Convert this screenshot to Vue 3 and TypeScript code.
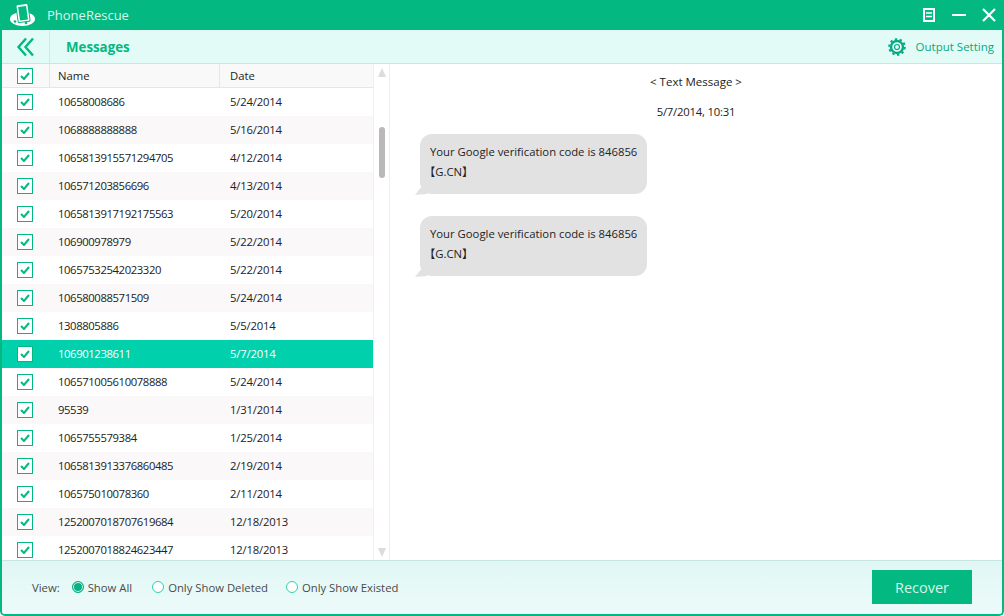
<script setup lang="ts">
interface Row { name: string; date: string; selected?: boolean }
const rows: Row[] = [
  { name: '10658008686', date: '5/24/2014' },
  { name: '1068888888888', date: '5/16/2014' },
  { name: '1065813915571294705', date: '4/12/2014' },
  { name: '106571203856696', date: '4/13/2014' },
  { name: '1065813917192175563', date: '5/20/2014' },
  { name: '106900978979', date: '5/22/2014' },
  { name: '10657532542023320', date: '5/22/2014' },
  { name: '106580088571509', date: '5/24/2014' },
  { name: '1308805886', date: '5/5/2014' },
  { name: '106901238611', date: '5/7/2014', selected: true },
  { name: '106571005610078888', date: '5/24/2014' },
  { name: '95539', date: '1/31/2014' },
  { name: '1065755579384', date: '1/25/2014' },
  { name: '1065813913376860485', date: '2/19/2014' },
  { name: '106575010078360', date: '2/11/2014' },
  { name: '1252007018707619684', date: '12/18/2013' },
  { name: '1252007018824623447', date: '12/18/2013' },
]
const views = ['Show All', 'Only Show Deleted', 'Only Show Existed']
const bubbles = [0, 1]
</script>

<template>
  <div class="app">
    <header class="titlebar">
      <svg class="logo" width="28" height="26" viewBox="0 0 28 26">
        <ellipse cx="13.500" cy="17" rx="12.500" ry="7" fill="#fff" />
        <rect x="7.500" y="1.500" width="13" height="19" rx="1.500" transform="rotate(-8 14 11)" fill="#03b981" />
        <rect x="8.500" y="2.500" width="11" height="17" rx="1" transform="rotate(-8 14 11)" fill="#fff" />
        <rect x="10" y="4.500" width="8" height="13.500" transform="rotate(-8 14 11)" fill="#03b981" />
        <circle cx="6" cy="19.500" r="1.300" fill="#03b981" />
        <circle cx="17" cy="21" r="1.300" fill="#03b981" />
      </svg>
      <span class="app-name">PhoneRescue</span>
      <div class="window-controls">
        <svg width="13" height="14" viewBox="0 0 13 14" fill="none" stroke="#fff" stroke-width="2">
          <rect x="1" y="1" width="10" height="12" />
          <path d="M3 5h6M3 8.500h6" stroke-width="1.500" />
        </svg>
        <svg width="14" height="14" viewBox="0 0 14 14"><rect y="6" width="14" height="2" fill="#fff" /></svg>
        <svg width="14" height="14" viewBox="0 0 14 14" stroke="#fff" stroke-width="2.200"><path d="M1 1l12 12M13 1L1 13" /></svg>
      </div>
    </header>

    <div class="toolbar">
      <div class="back">
        <svg width="19" height="20" viewBox="0 0 19 20" fill="none" stroke="#03b981" stroke-width="2.400">
          <path d="M10 1.500L2.500 10l7.500 8.500" />
          <path d="M17 1.500L9.500 10l7.500 8.500" />
        </svg>
      </div>
      <h1 class="page-title">Messages</h1>
      <div class="output">
        <svg width="18" height="18" viewBox="0 0 18 18" fill="none" stroke="#07a980">
          <circle cx="9" cy="9" r="6" stroke-width="2.400" />
          <circle cx="9" cy="9" r="7.800" stroke-width="2" stroke-dasharray="2.400 2.500" />
          <circle cx="9" cy="9" r="2.500" stroke-width="1.200" />
        </svg>
        <span>Output Setting</span>
      </div>
    </div>

    <main class="content">
      <section class="list-pane">
        <div class="table">
          <div class="head">
            <div class="check-cell head-check"><span class="check"><svg width="10" height="8" viewBox="0 0 10 8" fill="none"><path d="M1 4l3 3 5-6" /></svg></span></div>
            <div class="head-name">Name</div>
            <div class="head-date">Date</div>
          </div>
          <div v-for="row in rows" :key="row.name" class="row" :class="{ selected: row.selected }">
            <div class="check-cell"><span class="check"><svg width="10" height="8" viewBox="0 0 10 8" fill="none"><path d="M1 4l3 3 5-6" /></svg></span></div>
            <div class="cell-name">{{ row.name }}</div>
            <div class="cell-date">{{ row.date }}</div>
          </div>
        </div>
        <div class="scrollbar">
          <svg width="8" height="9" viewBox="0 0 8 9"><path d="M4 0l4 9H0z" fill="#dcdcdc" /></svg>
          <div class="track"><div class="thumb"></div></div>
          <svg width="8" height="9" viewBox="0 0 8 9"><path d="M4 9L0 0h8z" fill="#dcdcdc" /></svg>
        </div>
      </section>

      <section class="detail">
        <div class="kind">&lt; Text Message &gt;</div>
        <div class="stamp">5/7/2014, 10:31</div>
        <div v-for="b in bubbles" :key="b" class="bubble">
          Your Google verification code is 846856<br /><span class="tag">【G.CN】</span>
        </div>
      </section>
    </main>

    <footer class="footer">
      <div class="views">
        <span class="view-label">View:</span>
        <label v-for="(v, i) in views" :key="v" class="radio-item">
          <span class="radio" :class="{ on: i === 0 }"></span>{{ v }}
        </label>
      </div>
      <button class="recover">Recover</button>
    </footer>
  </div>
</template>

<style>
html, body { margin: 0; padding: 0; background: #fff; }
</style>

<style scoped>
.app {
  width: 1004px;
  height: 616px;
  box-sizing: border-box;
  display: flex;
  flex-direction: column;
  border: 2px solid #03b981;
  border-top: 0;
  border-radius: 0 0 5px 5px;
  font-family: "Open Sans", "Noto Sans CJK SC", sans-serif;
  font-size: 11.300px;
  color: #222;
  overflow: hidden;
  background: #fff;
}
.titlebar {
  height: 30px;
  margin: 0 -2px;
  flex: none;
  display: flex;
  align-items: center;
  background: #03b981;
  color: #d9f7ee;
  padding: 0 8px 0 9px;
}
.logo { margin-top: -1px; }
.app-name { margin-left: 10px; font-size: 13px; }
.window-controls {
  margin-left: auto;
  display: flex;
  align-items: center;
  gap: 16px;
}
.toolbar {
  height: 34px;
  flex: none;
  box-sizing: border-box;
  display: flex;
  align-items: center;
  background: #e2fbf7;
  border-bottom: 1px solid #b5efe2;
}
.back {
  width: 48px;
  height: 33px;
  box-sizing: border-box;
  border-right: 1px solid #c3f0e6;
  display: flex;
  align-items: center;
  justify-content: center;
  padding-right: 1px;
}
.page-title {
  margin: 0 0 0 16px;
  font-size: 13.300px;
  font-weight: 700;
  color: #03b981;
}
.output {
  margin-left: auto;
  margin-right: 8px;
  display: flex;
  align-items: center;
  gap: 10px;
  font-size: 11.500px;
  color: #07a980;
}
.content {
  flex: 1;
  min-height: 0;
  display: flex;
}
.list-pane {
  width: 388px;
  flex: none;
  display: flex;
  box-sizing: border-box;
  border-right: 1px solid #eeeeee;
}
.table {
  width: 371px;
  flex: none;
  overflow: hidden;
  border-right: 1px solid #f0f0f0;
}
.head {
  height: 24px;
  box-sizing: border-box;
  display: flex;
  align-items: center;
  background: #f9f9f9;
  border-bottom: 1px solid #e6e6e6;
}
.head-check { border-right: 1px solid #e6e6e6; height: 23px; }
.head-name {
  width: 170px;
  box-sizing: border-box;
  padding-left: 8px;
  height: 23px;
  line-height: 23px;
  border-right: 1px solid #e6e6e6;
}
.head-date { padding-left: 10px; padding-bottom: 1px; }
.row {
  height: 28px;
  display: flex;
  align-items: center;
}
.row:nth-child(odd) { background: #faf8f9; }
.row.selected { background: #00d0ac; color: #fff; }
.check-cell {
  width: 48px;
  flex: none;
  box-sizing: border-box;
  display: flex;
  align-items: center;
  padding-left: 15px;
}
.check {
  width: 16px;
  height: 16px;
  box-sizing: border-box;
  border: 1px solid #03b981;
  background: #fff;
  display: flex;
  align-items: center;
  justify-content: center;
}
.check path { stroke: #03b981; stroke-width: 2; }
.cell-name {
  width: 170px;
  padding: 0 0 1px 8px;
  box-sizing: border-box;
  flex: none;
  letter-spacing: -0.400px;
}
.cell-date { padding: 0 0 1px 10px; letter-spacing: -0.200px; }
.scrollbar {
  flex: 1;
  display: flex;
  flex-direction: column;
  align-items: center;
  padding: 4px 0 3px;
  box-sizing: border-box;
}
.track { flex: 1; width: 6px; padding-top: 50px; }
.thumb {
  width: 6px;
  height: 51px;
  border-radius: 3px;
  background: #b9b9b9;
}
.detail {
  flex: 1;
  display: flex;
  flex-direction: column;
  align-items: flex-start;
}
.kind {
  align-self: stretch;
  text-align: center;
  margin-top: 9px;
  height: 18px;
  line-height: 18px;
  font-size: 11.500px;
}
.stamp {
  align-self: stretch;
  text-align: center;
  margin-top: 12px;
  height: 18px;
  line-height: 18px;
  letter-spacing: -0.200px;
}
.bubble {
  position: relative;
  width: 227px;
  height: 60px;
  margin: 13px 0 9px 30px;
  box-sizing: border-box;
  padding: 8px 10px;
  line-height: 20px;
  background: #e2e2e2;
  border-radius: 12px;
  white-space: nowrap;
}
.tag { margin-left: -6px; }
.bubble::after {
  content: "";
  position: absolute;
  left: -5px;
  bottom: -1px;
  width: 12px;
  height: 7px;
  background: #e2e2e2;
  clip-path: polygon(45% 0, 100% 0, 100% 85%, 0 100%);
}
.footer {
  height: 54px;
  flex: none;
  box-sizing: border-box;
  display: flex;
  align-items: flex-start;
  justify-content: space-between;
  background: linear-gradient(#e0f7f5, #edfbfa);
  border-top: 1px solid #c5e6e2;
  padding: 9px 30px 0 30px;
}
.views {
  display: flex;
  align-items: center;
  height: 34px;
  color: #4a4a4a;
}
.view-label { margin-right: 12px; }
.radio-item {
  display: flex;
  align-items: center;
  margin-right: 18px;
}
.radio-item:first-of-type { margin-right: 20px; }
.radio {
  width: 12px;
  height: 12px;
  box-sizing: border-box;
  border-radius: 50%;
  border: 1px solid #2fd0b0;
  background: #fff;
  margin-right: 4px;
}
.radio.on {
  background: #07b184;
  border-color: #07b184;
  box-shadow: inset 0 0 0 1px #dff7ef;
}
.recover {
  width: 100px;
  height: 34px;
  border: 0;
  background: #03b981;
  color: #d5f5ea;
  font: 14.500px "Open Sans", sans-serif;
  padding: 0;
}
</style>
